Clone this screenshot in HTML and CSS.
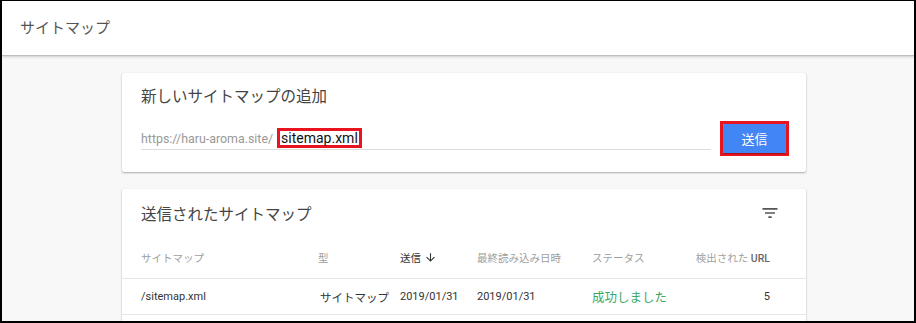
FILE: index.html
```html
<!DOCTYPE html>
<html>
<head>
<title>サイトマップ</title>
<link rel="stylesheet" href="styles.css">
</head>
<body>
<div class="frame">
  <div class="topbar">サイトマップ</div>
  <div class="main">
    <div class="card add">
      <div class="card-title">新しいサイトマップの追加</div>
      <div class="add-row">
        <div class="url-field">
          <span class="prefix">https://haru-aroma.site/</span>
          <span class="typed">sitemap.xml</span>
        </div>
        <div class="mark-btn"><button class="button">送信</button></div>
      </div>
    </div>
    <div class="card list">
      <div class="list-head">
        <div class="card-title">送信されたサイトマップ</div>
        <svg class="filter" viewBox="0 0 24 24" width="20" height="20"><path d="M10 18h4v-2h-4v2zM3 6v2h18V6H3zm3 7h12v-2H6v2z"/></svg>
      </div>
      <div class="grid-row th">
        <div>サイトマップ</div>
        <div>型</div>
        <div class="sorted">送信 <svg viewBox="0 0 24 24" width="13" height="13"><path d="M20 12l-1.41-1.41L13 16.17V4h-2v12.17l-5.58-5.59L4 12l8 8 8-8z"/></svg></div>
        <div>最終読み込み日時</div>
        <div>ステータス</div>
        <div class="num">検出された <b>URL</b></div>
      </div>
      <div class="grid-row td">
        <div>/sitemap.xml</div>
        <div class="jp">サイトマップ</div>
        <div>2019/01/31</div>
        <div>2019/01/31</div>
        <div class="ok">成功しました</div>
        <div class="num">5</div>
      </div>
      <div class="grid-row td"></div>
    </div>
  </div>
</div>
</body>
</html>
```

FILE: styles.css
```css
body {
  margin: 0;
  font-family: Roboto, "Noto Sans CJK JP", sans-serif;
  background-color: #fff;
}
.frame {
  width: 916px;
  height: 323px;
  box-sizing: border-box;
  border: 2px solid #000;
  border-top-width: 1px;
  background-color: #f8f8f8;
  overflow: hidden;
}
.topbar {
  height: 54px;
  background-color: #fff;
  box-shadow: 0 1px 1px #bdbdbd, 0 2px 3px rgba(0,0,0,0.15);
  color: #555;
  font-size: 15px;
  line-height: 54px;
  padding-left: 18px;
  position: relative;
}
.main {
  padding: 18px 0 0 120px;
}
.card {
  width: 684px;
  background-color: #fff;
  border-radius: 2px;
  box-shadow: 0 1px 2px rgba(0,0,0,0.3), 0 0 1px rgba(0,0,0,0.1);
}
.add {
  height: 99px;
  box-sizing: border-box;
  padding: 12px 17px 0 19px;
}
.card-title {
  font-size: 15.5px;
  color: #444;
  line-height: 24px;
}
.add-row {
  display: flex;
  align-items: center;
  margin-top: 12px;
}
.url-field {
  flex: 1;
  border-bottom: 1px solid #ddd;
  height: 21px;
  display: flex;
  align-items: center;
}
.prefix {
  color: #999;
  font-size: 12.4px;
}
.typed {
  color: #111;
  font-size: 14px;
  border: 3px solid #e8141f;
  padding: 0 1px 0 1px;
  margin-left: 4px;
  line-height: 14px;
}
.mark-btn {
  margin-left: 9px;
  border: 3px solid #e8141f;
}
.button {
  display: block;
  background-color: #4285f4;
  color: #fff;
  border: 0;
  width: 63px;
  height: 29px;
  font-family: Roboto, "Noto Sans CJK JP", sans-serif;
  font-size: 13px;
  border-radius: 1px;
  box-shadow: 0 1px 1px rgba(0,0,0,0.3);
}
.list {
  margin-top: 17px;
  height: 200px;
}
.list-head {
  display: flex;
  justify-content: space-between;
  align-items: center;
  padding: 5px 26px 0 19px;
  height: 42px;
}
.filter {
  fill: #555;
  margin-top: -4px;
}
.grid-row {
  display: grid;
  grid-template-columns: 177px 82px 77px 115px 1fr 100px;
  padding: 0 36px 0 19px;
  align-items: center;
  border-bottom: 1px solid #e6e6e6;
  white-space: nowrap;
}
.th {
  height: 42px;
  color: #9e9e9e;
  font-size: 10.5px;
}
.th b {
  font-weight: 500;
  color: #666;
}
.sorted {
  color: #333;
  display: flex;
  align-items: center;
  gap: 3px;
}
.sorted svg {
  fill: #333;
}
.td {
  height: 35px;
  color: #333;
  font-size: 11px;
}
.jp {
  font-size: 11.5px;
  padding-left: 2px;
}
.ok {
  color: #3aa865;
  font-size: 12.5px;
}
.num {
  text-align: right;
}
```
